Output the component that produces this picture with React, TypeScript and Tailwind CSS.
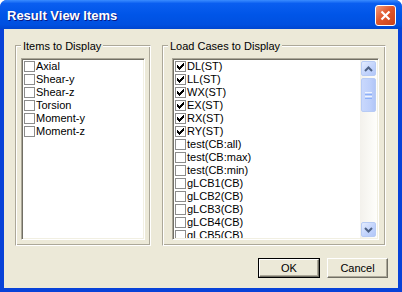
import React from "react";

const items = ["Axial", "Shear-y", "Shear-z", "Torsion", "Moment-y", "Moment-z"];

const cases: [string, boolean][] = [
  ["DL(ST)", true],
  ["LL(ST)", true],
  ["WX(ST)", true],
  ["EX(ST)", true],
  ["RX(ST)", true],
  ["RY(ST)", true],
  ["test(CB:all)", false],
  ["test(CB:max)", false],
  ["test(CB:min)", false],
  ["gLCB1(CB)", false],
  ["gLCB2(CB)", false],
  ["gLCB3(CB)", false],
  ["gLCB4(CB)", false],
  ["gLCB5(CB)", false],
];

function Check({ on }: { on?: boolean }) {
  return (
    <span className="ml-[1px] mt-[1px] w-[11px] h-[11px] shrink-0 border border-[#8c8c8c] bg-white flex items-center justify-center">
      {on && (
        <svg width="7" height="7" viewBox="0 0 7 7" shapeRendering="crispEdges">
          <path
            d="M0 2h1v3H0zM1 3h1v3H1zM2 4h1v3H2zM3 3h1v3H3zM4 2h1v3H4zM5 1h1v3H5zM6 0h1v3H6z"
            fill="#000"
          />
        </svg>
      )}
    </span>
  );
}

function Row({ label, on }: { label: string; on?: boolean }) {
  return (
    <div className="flex h-[13px] shrink-0 items-start">
      <Check on={on} />
      <span className="pl-[1px] leading-[13px] text-black whitespace-nowrap">{label}</span>
    </div>
  );
}

function Group({ label, className, children }: { label: string; className: string; children: React.ReactNode }) {
  return (
    <div
      className={`flex flex-col h-[201px] border border-t-[#ACA899] border-l-[#ACA899] border-r-white border-b-white shadow-[inset_1px_1px_0_#fff,inset_-1px_-1px_0_#ACA899] ${className}`}
    >
      <span className="-mt-[6px] self-start bg-[#ECE9D8] px-[2px] leading-[13px] ml-[5px]">{label}</span>
      {children}
    </div>
  );
}

const sunken =
  "border border-t-[#ACA899] border-l-[#ACA899] border-r-white border-b-white shadow-[inset_1px_1px_0_#716F64,inset_-1px_-1px_0_#F1EFE2] bg-white";

function Arrow({ up }: { up?: boolean }) {
  return (
    <div className="mx-[1px] h-[15px] rounded-[2px] border border-[#B7CBF5] bg-[linear-gradient(135deg,#E4ECFE,#C3D4FC_55%,#B2C7F8)] flex items-center justify-center">
      <svg width="9" height="6" viewBox="0 0 9 6">
        <path
          d={up ? "M1 5 L4.5 1.5 L8 5" : "M1 1 L4.5 4.5 L8 1"}
          fill="none"
          stroke="#4D6185"
          strokeWidth="2"
        />
      </svg>
    </div>
  );
}

function Scrollbar() {
  return (
    <div className="w-[17px] shrink-0 flex flex-col pt-[1px] pb-[1px] bg-[linear-gradient(to_right,#F3F1EC,#FEFEFB)]">
      <Arrow up />
      <div className="mt-[2px] mx-[1px] h-[34px] rounded-[2px] border border-[#B7CBF5] bg-[linear-gradient(to_right,#C9D8FC,#BED0FB_60%,#B2C6F7)] flex flex-col items-center justify-center gap-[1px]">
        <div className="w-[7px] h-[1px] bg-[#EEF4FE]" />
        <div className="w-[7px] h-[1px] bg-[#8CB0F8]" />
        <div className="w-[7px] h-[1px] bg-[#EEF4FE]" />
        <div className="w-[7px] h-[1px] bg-[#8CB0F8]" />
      </div>
      <div className="flex-1" />
      <Arrow />
    </div>
  );
}

function Button({ label, isDefault }: { label: string; isDefault?: boolean }) {
  return (
    <div className={`h-[20px] ${isDefault ? "w-[62px] border border-black" : "w-[61px]"}`}>
      <div className="h-full border border-t-white border-l-white border-r-[#716F64] border-b-[#716F64] shadow-[inset_-1px_-1px_0_#ACA899] bg-[#ECE9D8] flex items-center justify-center leading-[13px]">
        {label}
      </div>
    </div>
  );
}

export default function App() {
  return (
    <div className="w-[402px] h-[292px] flex flex-col rounded-t-[7px] overflow-hidden bg-[#0842D8] font-['Liberation_Sans',Arial,sans-serif] text-[11px] text-black">
      {/* Title bar */}
      <div className="h-[29px] shrink-0 flex items-center justify-between pt-[2px] pl-[7px] pr-[6px] bg-[linear-gradient(to_bottom,#3A8CFF,#0A5EF0_12%,#0055E8_50%,#0050E0_85%,#0046D0)]">
        <span className="text-white font-bold text-[13px] leading-[16px] [text-shadow:1px_1px_0_#0A1883]">
          Result View Items
        </span>
        <div className="w-[21px] h-[21px] rounded-[3px] border border-white bg-[linear-gradient(135deg,#F19C7D,#E0582D_45%,#C9411A)] flex items-center justify-center">
          <svg width="11" height="11" viewBox="0 0 11 11">
            <path d="M1.5 1.5 L9.5 9.5 M9.5 1.5 L1.5 9.5" stroke="#fff" strokeWidth="2.2" />
          </svg>
        </div>
      </div>

      {/* Client area */}
      <div className="flex-1 mx-[4px] mb-[4px] bg-[#ECE9D8] flex flex-col">
        <div className="flex pt-[16px] pl-[11px] gap-[11px]">
          <Group label="Items to Display" className="w-[136px]">
            <div className={`mt-[5px] ml-[5px] w-[124px] h-[182px] ${sunken} p-[1px]`}>
              <div className="flex flex-col overflow-hidden h-full">
                {items.map((it) => (
                  <Row key={it} label={it} />
                ))}
              </div>
            </div>
          </Group>
          <Group label="Load Cases to Display" className="w-[224px]">
            <div className={`mt-[5px] ml-[9px] w-[207px] h-[182px] ${sunken} p-[1px] flex`}>
              <div className="flex-1 flex flex-col overflow-hidden">
                {cases.map(([c, on]) => (
                  <Row key={c} label={c} on={on} />
                ))}
              </div>
              <Scrollbar />
            </div>
          </Group>
        </div>

        <div className="flex justify-end gap-[7px] pr-[10px] pt-[12px]">
          <Button label="OK" isDefault />
          <Button label="Cancel" />
        </div>
      </div>
    </div>
  );
}
